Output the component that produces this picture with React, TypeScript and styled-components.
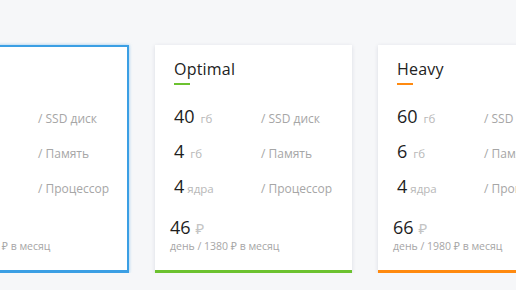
import React from 'react';
import styled, { createGlobalStyle } from 'styled-components';

interface Plan {
  id: string;
  title: string;
  accent: string;
  disk: number;
  ram: number;
  cores: number;
  day: number;
  month: number;
  active?: boolean;
}

const plans: Plan[] = [
  { id: 'start', title: 'Start', accent: '#3b9fe4', disk: 20, ram: 2, cores: 2, day: 26, month: 780, active: true },
  { id: 'optimal', title: 'Optimal', accent: '#6cc230', disk: 40, ram: 4, cores: 4, day: 46, month: 1380 },
  { id: 'heavy', title: 'Heavy', accent: '#ff8a10', disk: 60, ram: 6, cores: 4, day: 66, month: 1980 },
];

const GlobalStyle = createGlobalStyle`
  html, body {
    margin: 0;
    padding: 0;
    background: #f6f7f9;
    font-family: "Open Sans", "Noto Sans", sans-serif;
    overflow: hidden;
  }
`;

const Row = styled.div`
  display: flex;
  gap: 26px;
  padding-top: 45px;
  margin-left: -68px;
`;

const Card = styled.div<{ $accent: string; $active?: boolean }>`
  flex: 0 0 197px;
  height: 228px;
  box-sizing: border-box;
  background: #fff;
  padding: 13px 19px 0;
  box-shadow: ${({ $active, $accent }) =>
    $active
      ? `inset 0 0 0 2px ${$accent}, 0 0 3px rgba(59, 159, 228, 0.55)`
      : '0 1px 4px rgba(40, 60, 90, 0.14)'};
  border-bottom: ${({ $accent, $active }) => ($active ? `1px solid ${$accent}` : `3px solid ${$accent}`)};
`;

const Title = styled.div`
  font-size: 16px;
  line-height: 22px;
  color: #222;
  letter-spacing: 0.2px;
`;

const Underline = styled.div<{ $accent: string }>`
  width: 16px;
  height: 2px;
  margin-top: 3px;
  background: ${({ $accent }) => $accent};
`;

const Specs = styled.div`
  display: grid;
  grid-template-columns: 87px 1fr;
  grid-auto-rows: 35px;
  margin-top: 14px;
  align-items: baseline;
  line-height: 35px;
  white-space: nowrap;
`;

const Value = styled.div`
  font-size: 18px;
  color: #1e1e1e;
`;

const Unit = styled.span`
  font-size: 11.5px;
  color: #b8b8b8;
  margin-left: 6px;
`;

const CoreUnit = styled(Unit)`
  margin-left: 3px;
`;

const Label = styled.div`
  font-size: 12px;
  color: #a6a6a6;
`;

const Price = styled.div`
  margin: 12px 0 0 -4px;
  white-space: nowrap;
`;

const Amount = styled.div`
  font-size: 18px;
  line-height: 22px;
  color: #1e1e1e;
`;

const Ruble = styled.span`
  font-size: 15px;
  color: #c4c4c4;
  margin-left: 5px;
`;

const Sub = styled.div`
  font-size: 10.5px;
  line-height: 14px;
  color: #a6a6a6;
`;

const PlanCard: React.FC<{ plan: Plan }> = ({ plan }) => (
  <Card $accent={plan.accent} $active={plan.active}>
    <Title>{plan.title}</Title>
    <Underline $accent={plan.accent} />
    <Specs>
      <Value>
        {plan.disk}
        <Unit>гб</Unit>
      </Value>
      <Label>/ SSD диск</Label>
      <Value>
        {plan.ram}
        <Unit>гб</Unit>
      </Value>
      <Label>/ Память</Label>
      <Value>
        {plan.cores}
        <CoreUnit>ядра</CoreUnit>
      </Value>
      <Label>/ Процессор</Label>
    </Specs>
    <Price>
      <Amount>
        {plan.day}
        <Ruble>₽</Ruble>
      </Amount>
      <Sub>день / {plan.month} ₽ в месяц</Sub>
    </Price>
  </Card>
);

export default function App() {
  return (
    <>
      <GlobalStyle />
      <Row>
        {plans.map(p => (
          <PlanCard key={p.id} plan={p} />
        ))}
      </Row>
    </>
  );
}
